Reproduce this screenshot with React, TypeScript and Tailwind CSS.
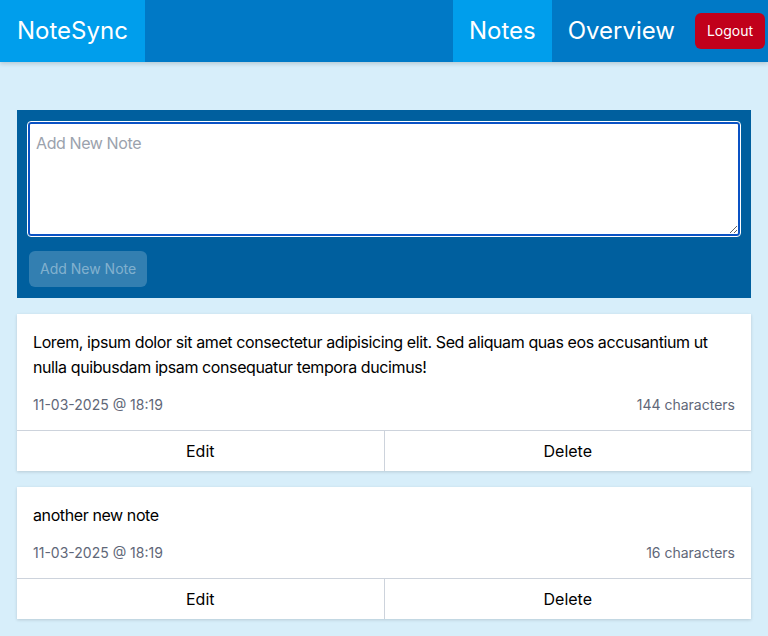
import { useState } from "react"

interface Note {
  id: number
  text: string
  date: string
}

const notes: Note[] = [
  {
    id: 1,
    text: "Lorem, ipsum dolor sit amet consectetur adipisicing elit. Sed aliquam quas eos accusantium ut nulla quibusdam ipsam consequatur tempora ducimus!",
    date: "11-03-2025 @ 18:19",
  },
  { id: 2, text: "another new note", date: "11-03-2025 @ 18:19" },
]

function NoteCard({ note }: { note: Note }) {
  return (
    <div className="bg-white shadow-[0_1px_3px_rgba(0,0,0,0.15)]">
      <div className="px-4 pt-4 pb-[15px]">
        <p className="text-base leading-[25px] tracking-[-0.4px] text-black">{note.text}</p>
        <div className="mt-[15px] flex justify-between text-sm leading-5 text-[#5f6778]">
          <span>{note.date}</span>
          <span>{note.text.length} characters</span>
        </div>
      </div>
      <div className="flex border-t border-[#cdd3dc]">
        <button className="flex-1 h-10 text-base text-black">Edit</button>
        <button className="flex-1 h-10 text-base text-black border-l border-[#cdd3dc]">Delete</button>
      </div>
    </div>
  )
}

export default function App() {
  const [draft, setDraft] = useState("")

  return (
    <div className="min-h-[636px] bg-[#d7eefa] font-['Inter',sans-serif]">
      <header className="flex h-[62px] items-stretch bg-[#0079c6] text-white shadow-[0_2px_4px_rgba(0,0,0,0.15)]">
        <div className="flex items-center bg-[#009eec] px-[17px] text-2xl">NoteSync</div>
        <div className="flex-1" />
        <nav className="flex items-stretch">
          <a className="flex items-center bg-[#009eec] px-4 text-2xl">Notes</a>
          <a className="flex items-center px-4 text-2xl">Overview</a>
        </nav>
        <div className="flex items-center pl-1 pr-[3px]">
          <button className="h-9 w-[70px] rounded-md bg-[#c1001b] text-sm text-white">Logout</button>
        </div>
      </header>

      <main className="px-[17px] pt-12 pb-4 flex flex-col gap-4">
        <div className="bg-[#005f9e] px-[11px] pt-3 pb-[11px]">
          <textarea
            value={draft}
            onChange={(e) => setDraft(e.target.value)}
            placeholder="Add New Note"
            className="block h-[114px] w-full resize-y rounded-[3px] border-2 border-[#0a52c4] bg-white px-[6px] py-[7px] text-base tracking-[-0.4px] text-black outline outline-1 outline-white placeholder:text-[#9ba2ad]"
          />
          <button
            disabled
            className="ml-px mt-[15px] h-9 rounded-md bg-white/20 px-[11px] text-sm text-white/40"
          >
            Add New Note
          </button>
        </div>

        {notes.map((n) => (
          <NoteCard key={n.id} note={n} />
        ))}
      </main>
    </div>
  )
}
